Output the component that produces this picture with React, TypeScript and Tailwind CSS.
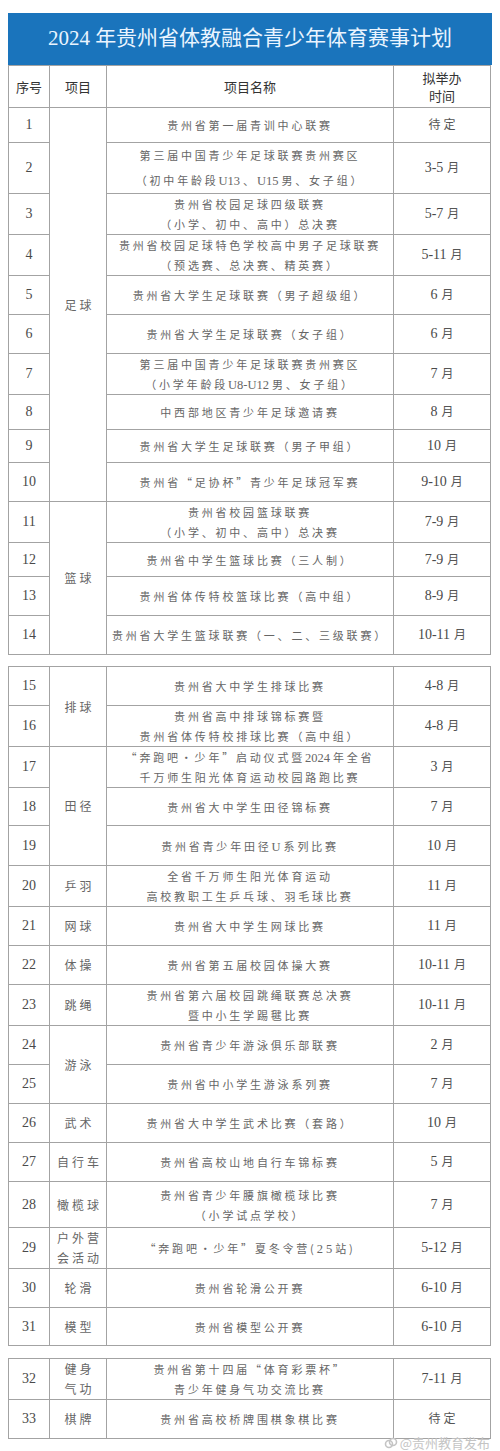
import React from "react";

type Row = {
  no: number;
  cat?: string[];
  span?: number;
  name: string[];
  time: string;
  h: number;
  lh?: string;
};

const serif = "font-['Liberation_Serif','Noto_Sans_CJK_SC',serif]";
const cjk = "font-['Noto_Sans_CJK_SC',sans-serif]";

const table1: Row[] = [
  { no: 1, cat: ["足球"], span: 10, name: ["贵州省第一届青训中心联赛"], time: "待定", h: 35 },
  { no: 2, name: ["第三届中国青少年足球联赛贵州赛区", "（初中年龄段 U13、U15 男、女子组）"], time: "3-5 月", h: 51, lh: "leading-[25px]" },
  { no: 3, name: ["贵州省校园足球四级联赛", "（小学、初中、高中）总决赛"], time: "5-7 月", h: 41 },
  { no: 4, name: ["贵州省校园足球特色学校高中男子足球联赛", "（预选赛、总决赛、精英赛）"], time: "5-11 月", h: 40 },
  { no: 5, name: ["贵州省大学生足球联赛（男子超级组）"], time: "6 月", h: 39 },
  { no: 6, name: ["贵州省大学生足球联赛（女子组）"], time: "6 月", h: 39 },
  { no: 7, name: ["第三届中国青少年足球联赛贵州赛区", "（小学年龄段 U8-U12 男、女子组）"], time: "7 月", h: 41 },
  { no: 8, name: ["中西部地区青少年足球邀请赛"], time: "8 月", h: 35 },
  { no: 9, name: ["贵州省大学生足球联赛（男子甲组）"], time: "10 月", h: 33 },
  { no: 10, name: ["贵州省“足协杯”青少年足球冠军赛"], time: "9-10 月", h: 39 },
  { no: 11, cat: ["篮球"], span: 4, name: ["贵州省校园篮球联赛", "（小学、初中、高中）总决赛"], time: "7-9 月", h: 41 },
  { no: 12, name: ["贵州省中学生篮球比赛（三人制）"], time: "7-9 月", h: 34 },
  { no: 13, name: ["贵州省体传特校篮球比赛（高中组）"], time: "8-9 月", h: 39 },
  { no: 14, name: ["贵州省大学生篮球联赛（一、二、三级联赛）"], time: "10-11 月", h: 39 },
];

const table2: Row[] = [
  { no: 15, cat: ["排球"], span: 2, name: ["贵州省大中学生排球比赛"], time: "4-8 月", h: 39 },
  { no: 16, name: ["贵州省高中排球锦标赛暨", "贵州省体传特校排球比赛（高中组）"], time: "4-8 月", h: 41 },
  { no: 17, cat: ["田径"], span: 3, name: ["“奔跑吧•少年”启动仪式暨 2024 年全省", "千万师生阳光体育运动校园路跑比赛"], time: "3 月", h: 41 },
  { no: 18, name: ["贵州省大中学生田径锦标赛"], time: "7 月", h: 38 },
  { no: 19, name: ["贵州省青少年田径 U 系列比赛"], time: "10 月", h: 40 },
  { no: 20, cat: ["乒羽"], name: ["全省千万师生阳光体育运动", "高校教职工生乒乓球、羽毛球比赛"], time: "11 月", h: 40 },
  { no: 21, cat: ["网球"], name: ["贵州省大中学生网球比赛"], time: "11 月", h: 39 },
  { no: 22, cat: ["体操"], name: ["贵州省第五届校园体操大赛"], time: "10-11 月", h: 39 },
  { no: 23, cat: ["跳绳"], name: ["贵州省第六届校园跳绳联赛总决赛", "暨中小生学踢毽比赛"], time: "10-11 月", h: 40 },
  { no: 24, cat: ["游泳"], span: 2, name: ["贵州省青少年游泳俱乐部联赛"], time: "2 月", h: 39 },
  { no: 25, name: ["贵州省中小学生游泳系列赛"], time: "7 月", h: 39 },
  { no: 26, cat: ["武术"], name: ["贵州省大中学生武术比赛（套路）"], time: "10 月", h: 39 },
  { no: 27, cat: ["自行车"], name: ["贵州省高校山地自行车锦标赛"], time: "5 月", h: 39 },
  { no: 28, cat: ["橄榄球"], name: ["贵州省青少年腰旗橄榄球比赛", "（小学试点学校）"], time: "7 月", h: 46 },
  { no: 29, cat: ["户外营", "会活动"], name: ["“奔跑吧•少年”夏冬令营(2 5 站)"], time: "5-12 月", h: 41 },
  { no: 30, cat: ["轮滑"], name: ["贵州省轮滑公开赛"], time: "6-10 月", h: 39 },
  { no: 31, cat: ["模型"], name: ["贵州省模型公开赛"], time: "6-10 月", h: 38 },
];

const table3: Row[] = [
  { no: 32, cat: ["健身", "气功"], name: ["贵州省第十四届“体育彩票杯”", "青少年健身气功交流比赛"], time: "7-11 月", h: 41 },
  { no: 33, cat: ["棋牌"], name: ["贵州省高校桥牌围棋象棋比赛"], time: "待定", h: 39 },
];

const cell = "border border-[#a3a3a3] text-center align-middle p-0";

// Latin/digit runs keep normal spacing, CJK runs get the wide tracking
function Spaced({ text }: { text: string }) {
  const parts = text.split(/([A-Za-z0-9\-]+)/).filter((p) => p !== "");
  return (
    <>
      {parts.map((p, i) =>
        /^[A-Za-z0-9\-]+$/.test(p) ? (
          <span key={i} className="font-['Liberation_Serif',serif] leading-none tracking-normal text-[12.5px] mr-[3px]">
            {p}
          </span>
        ) : (
          <span key={i}>{p.replace(/ /g, "")}</span>
        ),
      )}
    </>
  );
}

function Cols() {
  return (
    <colgroup>
      <col className="w-[41px]" />
      <col className="w-[57px]" />
      <col className="w-[287px]" />
      <col className="w-[97px]" />
    </colgroup>
  );
}

function Rows({ rows }: { rows: Row[] }) {
  return (
    <tbody>
      {rows.map((r) => (
        <tr key={r.no} style={{ height: r.h }}>
          <td className={`${cell} text-[14px] leading-[16px] text-[#4a4a4a]`}>{r.no}</td>
          {r.cat && (
            <td
              rowSpan={r.span ?? 1}
              className={`${cell} ${cjk} text-[12px] leading-[20px] tracking-[3px] text-[#666] pl-[3px]`}
            >
              {r.cat.map((c) => (
                <div key={c}>{c}</div>
              ))}
            </td>
          )}
          <td className={`${cell} ${cjk} text-[11px] tracking-[2.8px] text-[#666] ${r.lh ?? "leading-[20px]"}`}>
            {r.name.map((n) => (
              <div key={n} className="whitespace-nowrap">
                <Spaced text={n} />
              </div>
            ))}
          </td>
          <td className={`${cell} text-[14px] leading-[16px] text-[#4a4a4a]`}>
            {r.time.includes("月") ? (
              <>
                {r.time.replace(" 月", "")}
                <span className="text-[12px] leading-none ml-[4px] text-[#555]">月</span>
              </>
            ) : (
              <span className={`${cjk} text-[12px] leading-none tracking-[3px] pl-[3px] text-[#555]`}>{r.time}</span>
            )}
          </td>
        </tr>
      ))}
    </tbody>
  );
}

export default function App() {
  return (
    <div className={`w-[500px] h-[1451px] bg-white pt-[13px] px-[8px] ${serif}`}>
      {/* Title */}
      <div className="h-[52px] bg-[#1a74bc] flex items-center justify-center text-[#eaf4ff] text-[21px] font-normal">
        2024 年贵州省体教融合青少年体育赛事计划
      </div>

      <table className="w-[482px] table-fixed border-collapse">
        <Cols />
        <thead>
          <tr className={`h-[42px] ${cjk} text-[13px] text-[#333]`}>
            <td className={cell}>序号</td>
            <td className={cell}>项目</td>
            <td className={cell}>项目名称</td>
            <td className={`${cell} leading-[18px]`}>
              <div>拟举办</div>
              <div>时间</div>
            </td>
          </tr>
        </thead>
        <Rows rows={table1} />
      </table>

      <table className="w-[482px] table-fixed border-collapse mt-[11px]">
        <Cols />
        <Rows rows={table2} />
      </table>

      <table className="w-[482px] table-fixed border-collapse mt-[12px]">
        <Cols />
        <Rows rows={table3} />
      </table>

      {/* Watermark */}
      <div className={`flex justify-end items-center gap-[2px] -mt-[4px] pr-[2px] text-[#c4c4c4] ${cjk} text-[13px] leading-[16px]`}>
        <svg width="14" height="14" viewBox="0 0 14 14" fill="none" stroke="#c4c4c4" strokeWidth="1.6">
          <circle cx="5" cy="8" r="3.5" />
          <circle cx="9" cy="6" r="3.5" />
        </svg>
        <span>@贵州教育发布</span>
      </div>
    </div>
  );
}
